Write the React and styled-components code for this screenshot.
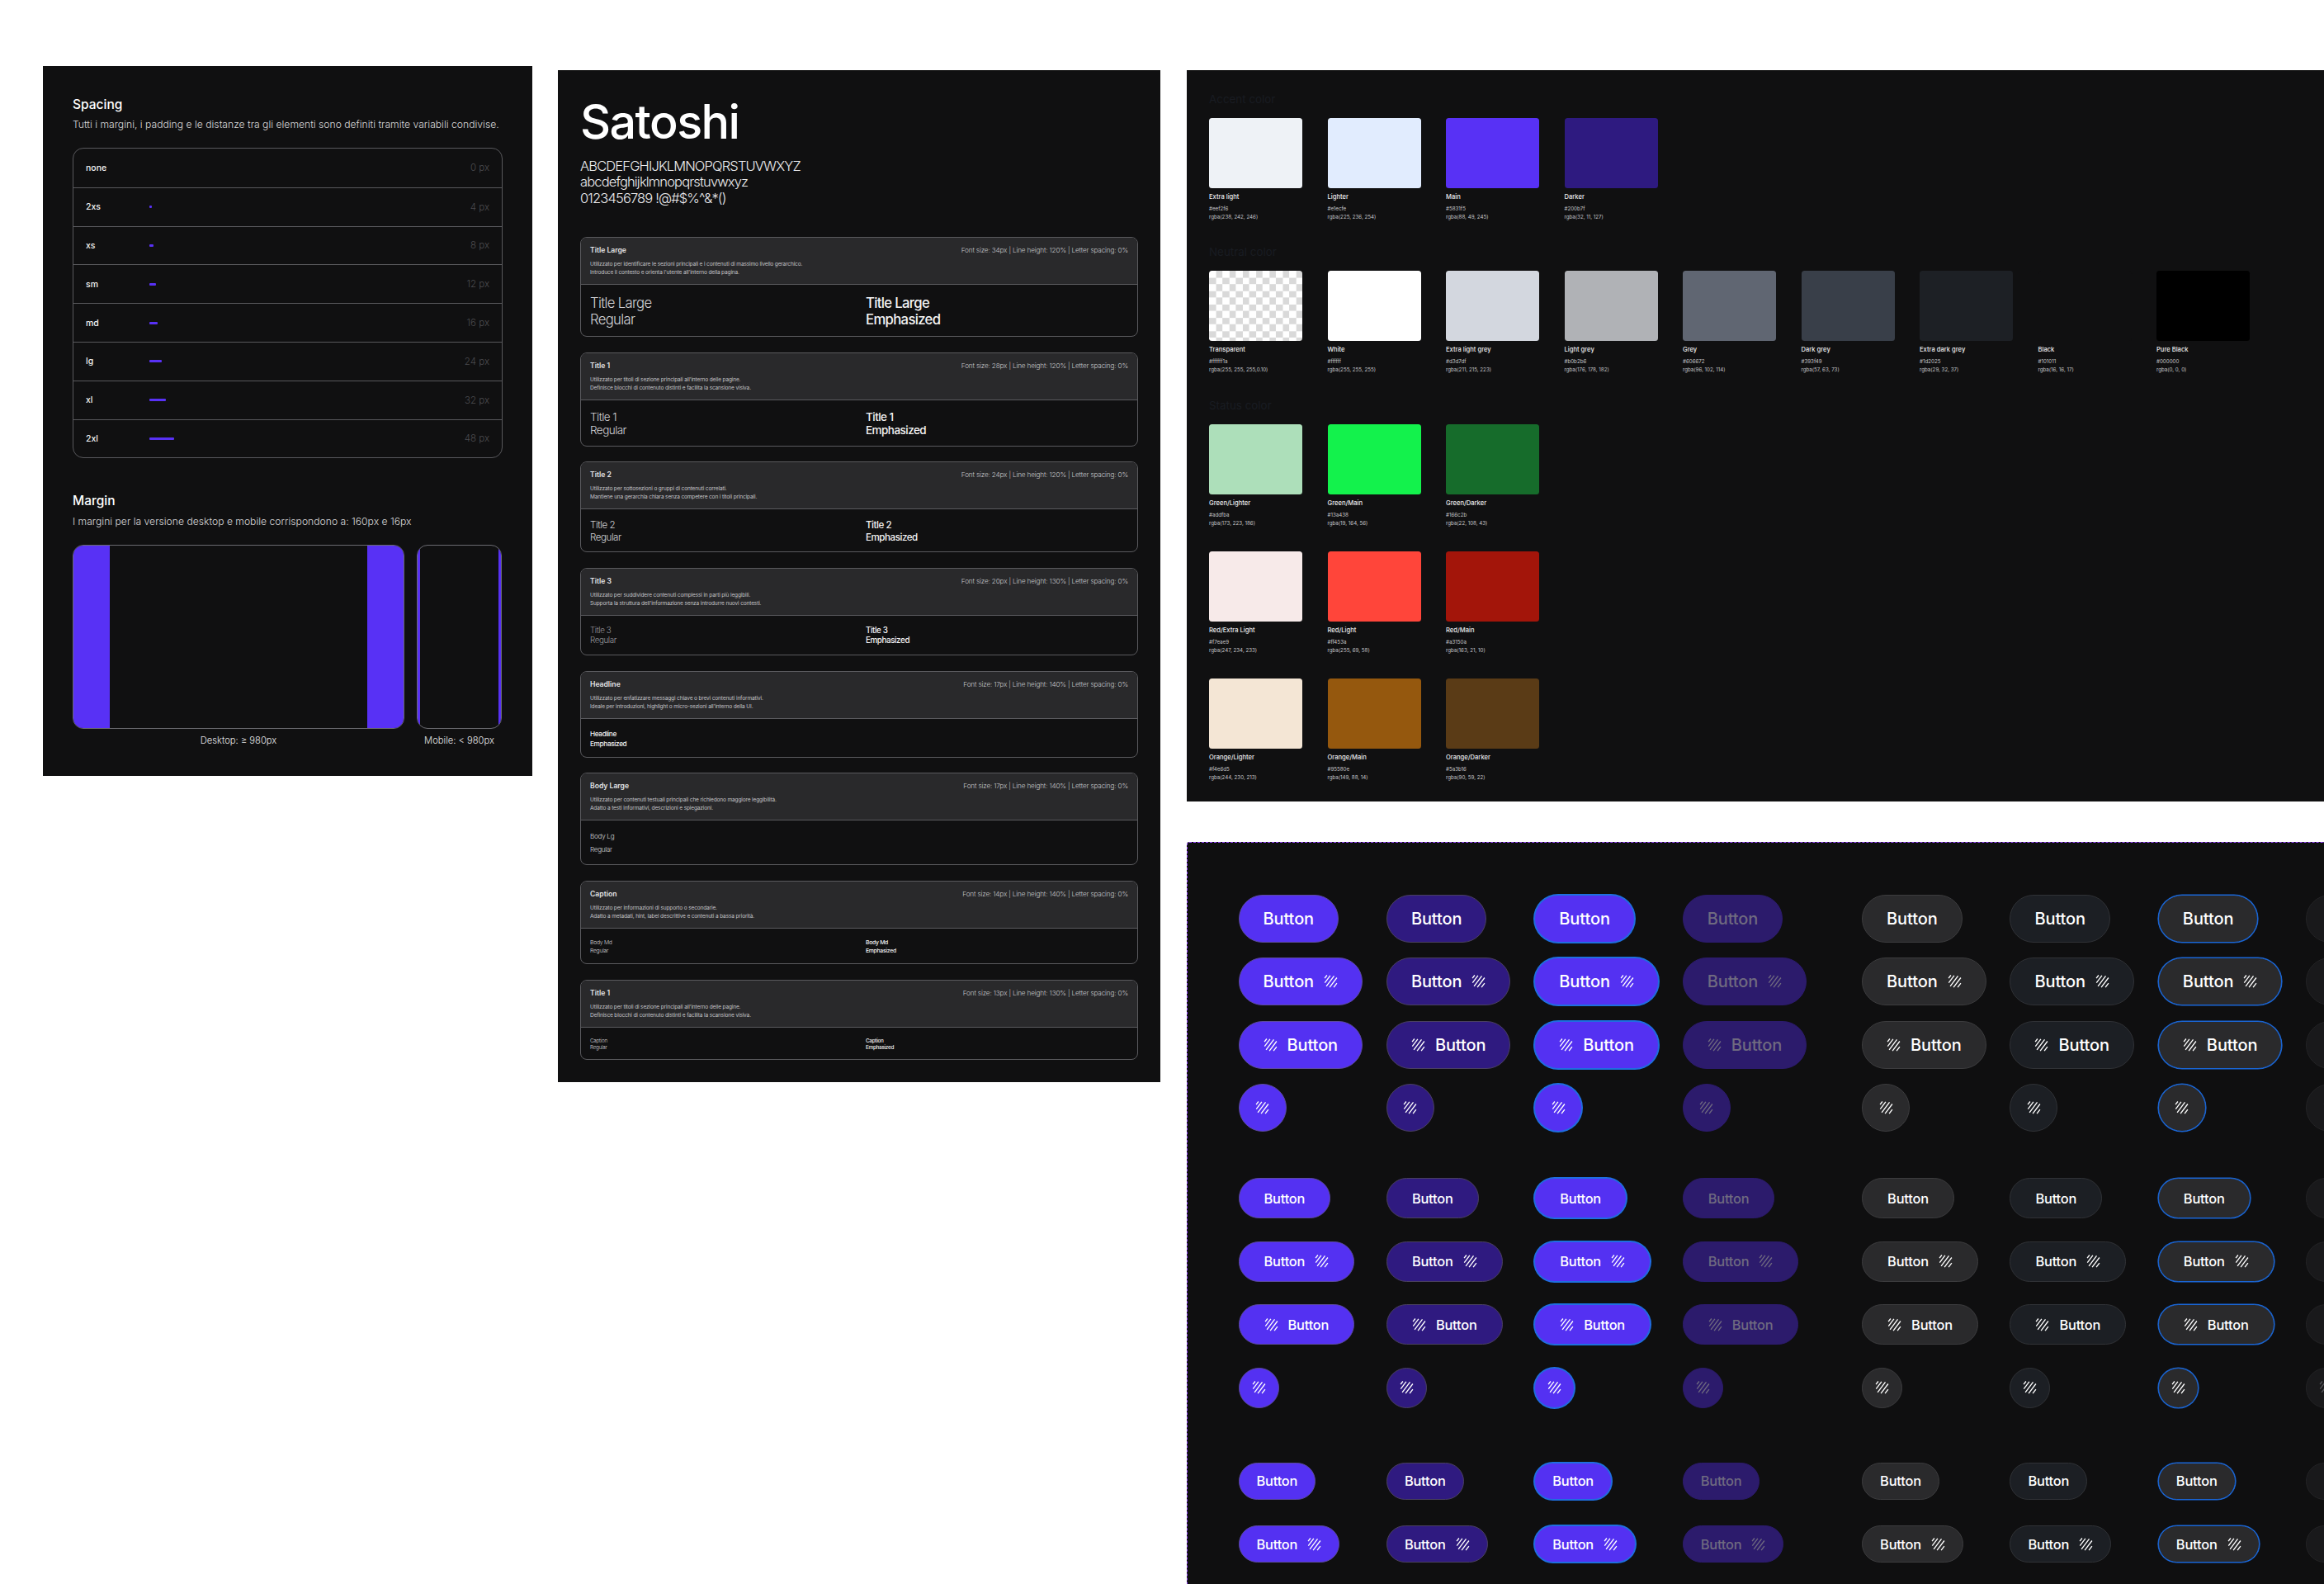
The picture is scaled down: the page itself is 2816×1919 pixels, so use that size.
import React from "react";
import styled, { createGlobalStyle, css } from "styled-components";

const FONT = `Inter, "Noto Sans", "Liberation Sans", sans-serif`;

const Global = createGlobalStyle`
  html, body { margin: 0; padding: 0; background: #fff; }
  body { width: 2816px; height: 1919px; overflow: hidden; font-family: ${FONT}; }
  * { box-sizing: border-box; }
`;

const Board = styled.div`
  display: flex;
  align-items: flex-start;
  gap: 31px;
  width: 2816px;
  height: 1919px;
  padding: 80px 0 0 52px;
  overflow: hidden;
`;

const Panel = styled.section`
  background: #101011;
  color: #f4f4f5;
`;

/* ---------- spacing panel ---------- */
const SpacingPanel = styled(Panel)`
  flex: 0 0 593px;
  min-width: 0;
  padding: 37px 36px 35px;
`;
const H2 = styled.h2`
  margin: 0;
  font-size: 15.5px;
  line-height: 20px;
  font-weight: 500;
  color: #fff;
`;
const Lead = styled.p`
  margin: ${(p) => p.$mt || 6}px 0 20px;
  font-size: 12.15px;
  line-height: 16px;
  font-weight: 300;
  color: #d8d8da;
  white-space: nowrap;
`;
const SpaceTable = styled.div`
  width: 521px;
  border: 1px solid #58585c;
  border-radius: 13px;
  margin-bottom: 42px;
`;
const SpaceRow = styled.div`
  display: flex;
  align-items: center;
  height: 46.8px;
  padding: 0 15px;
  border-top: ${(p) => (p.$first ? "none" : "1px solid #58585c")};
`;
const SpaceName = styled.span`
  flex: 0 0 77px;
  font-size: 10.5px;
  font-weight: 500;
  color: #f2f2f3;
`;
const SpaceBar = styled.span`
  height: 3px;
  background: #5831f5;
  border-radius: 1px;
  width: ${(p) => p.$w}px;
`;
const SpaceValue = styled.span`
  margin-left: auto;
  font-size: 11.5px;
  font-weight: 300;
  color: #4c4c50;
`;
const MarginRow = styled.div`
  display: flex;
  gap: 15px;
`;
const MarginCol = styled.div`
  display: flex;
  flex-direction: column;
  align-items: center;
  width: ${(p) => p.$w}px;
`;
const Frame = styled.div`
  position: relative;
  display: flex;
  justify-content: space-between;
  width: 100%;
  height: 223px;
  border: 1px solid #6a6a70;
  border-radius: 13px;
  overflow: hidden;
`;
const FrameMargin = styled.div`
  width: ${(p) => p.$w}px;
  background: #5831f5;
`;
const FrameLabel = styled.div`
  margin-top: 6px;
  font-size: 11.2px;
  line-height: 16px;
  font-weight: 300;
  color: #e4e4e6;
`;

/* ---------- type panel ---------- */
const TypePanel = styled(Panel)`
  flex: 0 0 730px;
  min-width: 0;
  margin-top: 5px;
  padding: 26px 27px 27px;
`;
const FontName = styled.h1`
  margin: 0;
  font-size: 57.5px;
  line-height: 72px;
  font-weight: 500;
  letter-spacing: -1.6px;
  color: #fff;
`;
const Glyphs = styled.div`
  margin: 8.5px 0 37px;
  font-size: 16.5px;
  line-height: 19.5px;
  font-weight: 300;
  color: #ececee;
  letter-spacing: -0.85px;
`;
const Cards = styled.div`
  display: flex;
  flex-direction: column;
  gap: 18.7px;
`;
const Card = styled.article`
  border: 1px solid #5a5a5e;
  border-radius: 8px;
  overflow: hidden;
`;
const CardHead = styled.header`
  display: flex;
  justify-content: space-between;
  height: 57px;
  padding: 10px 11px 0;
  background: #29292b;
  border-bottom: 1px solid #5a5a5e;
`;
const CardName = styled.div`
  font-size: 8.6px;
  line-height: 11px;
  font-weight: 600;
  color: #e6e6e8;
`;
const CardDesc = styled.div`
  margin-top: 6px;
  font-size: 6.5px;
  line-height: 10px;
  font-weight: 400;
  color: #c4c4c8;
  letter-spacing: -0.13px;
`;
const CardSpec = styled.div`
  font-size: 8.2px;
  line-height: 11px;
  font-weight: 300;
  color: #c8c8cc;
  letter-spacing: -0.16px;
  white-space: nowrap;
`;
const CardBody = styled.div`
  display: grid;
  grid-template-columns: 334px 1fr;
  padding: 12px 11px 10px;
`;
const Specimen = styled.div`
  font-size: ${(p) => p.$size}px;
  line-height: ${(p) => p.$lh}px;
  font-weight: ${(p) => (p.$strong ? 500 : 300)};
  color: ${(p) => (p.$strong ? "#f4f4f5" : p.$dim ? "#9a9a9e" : "#d2d2d5")};
  letter-spacing: -0.04em;
`;

/* ---------- colour panel ---------- */
const RightCol = styled.div`
  flex: 1;
  min-width: 0;
  margin-top: 5px;
  margin-left: 1px;
  display: flex;
  flex-direction: column;
  gap: 49px;
`;
const ColorPanel = styled(Panel)`
  height: 886px;
  padding: 26.5px 27px 0;
  display: flex;
  flex-direction: column;
  gap: 29.5px;
`;
const ColorHeading = styled.h3`
  margin: 0 0 14px;
  font-size: 13.4px;
  line-height: 17px;
  font-weight: 400;
  color: #191c22;
`;
const SwatchGrid = styled.div`
  display: grid;
  grid-template-columns: repeat(${(p) => p.$cols}, 113px);
  column-gap: 30.5px;
  row-gap: 29px;
`;
const Chip = styled.div`
  height: 85px;
  border-radius: 3.5px;
  background: ${(p) => p.$c};
  ${(p) =>
    p.$checker &&
    css`
      background-color: #fff;
      background-image: conic-gradient(#d9d9d9 25%, transparent 0 50%, #d9d9d9 0 75%, transparent 0);
      background-size: 16.2px 16.2px;
    `}
`;
const ChipName = styled.div`
  margin-top: 5px;
  font-size: 7.6px;
  line-height: 12px;
  font-weight: 500;
  color: #ececee;
  white-space: nowrap;
`;
const ChipHex = styled.div`
  margin-top: 3px;
  font-size: 6.2px;
  line-height: 10px;
  font-weight: 400;
  color: #c6c6ca;
  white-space: nowrap;
`;

/* ---------- buttons panel ---------- */
const ButtonPanel = styled(Panel)`
  position: relative;
  height: 899px;
  overflow: hidden;
  background: #0f0f10;
  border-top: 1.5px dashed #9747ff;
  border-left: 1.5px dashed #9747ff;
  border-top-left-radius: 3px;
  padding: 62.5px 0 0 61.5px;
`;
const ButtonGroup = styled.div`
  display: grid;
  width: 1500px;
  grid-template-columns: repeat(3, 179.4px) 217.4px repeat(4, 179.4px);
  row-gap: ${(p) => p.$gap}px;
  margin-bottom: ${(p) => p.$after}px;
  justify-items: start;
`;
const tones = {
  primary: css`
    background: #5431f2;
    color: #fff;
    border-color: #5c4a9e;
  `,
  deep: css`
    background: #2f1a80;
    color: #fff;
    border-color: #4a4060;
  `,
  focus: css`
    background: #5431f2;
    color: #fff;
    border-color: #1e6fe0;
    box-shadow: 0 0 0 1px #1e6fe0;
  `,
  off: css`
    background: #2c1b6c;
    color: #6f6a80;
    border-color: #2c1b6c;
  `,
  grey: css`
    background: #2a2a2c;
    color: #fff;
    border-color: #3c3c3e;
  `,
  slate: css`
    background: #1c1f24;
    color: #fff;
    border-color: #303236;
  `,
  ring: css`
    background: #2a2a2c;
    color: #fff;
    border-color: #1a66d6;
    box-shadow: 0 0 0 0.6px #1a66d6;
  `,
  mute: css`
    background: #19191b;
    color: #55555a;
    border-color: #232325;
  `,
};
const sizes = {
  lg: css`
    height: 58px;
    padding: 0 29px;
    font-size: 20px;
    letter-spacing: -0.1px;
  `,
  md: css`
    height: 49px;
    padding: 0 30px;
    font-size: 16.4px;
    letter-spacing: -0.2px;
  `,
  sm: css`
    height: 45px;
    padding: 0 21px;
    font-size: 16.4px;
    letter-spacing: -0.2px;
  `,
};
const Btn = styled.button`
  display: inline-flex;
  align-items: center;
  justify-content: center;
  gap: 12px;
  border: 1px solid transparent;
  border-radius: 999px;
  font-family: ${FONT};
  font-weight: 500;
  white-space: nowrap;
  ${(p) => sizes[p.$size]}
  ${(p) => tones[p.$tone]}
  ${(p) =>
    p.$round &&
    css`
      padding: 0;
      width: ${{ lg: 58, md: 49, sm: 45 }[p.$size]}px;
    `}
`;

const Hatch = () => (
  <svg width="17" height="16" viewBox="0 0 16 16" fill="none" stroke="currentColor" strokeWidth="1.35">
    <path d="M.6 4.2 3.4.5M.8 9.6 7.4.8M2.6 13.9 12 1.4M6.6 15.2 15.4 3.5M11.6 15.2l3.8-5.1" />
  </svg>
);

const spacing = [
  ["none", 0],
  ["2xs", 4],
  ["xs", 8],
  ["sm", 12],
  ["md", 16],
  ["lg", 24],
  ["xl", 32],
  ["2xl", 48],
];

const cards = [
  {
    name: "Title Large",
    spec: "Font size: 34px | Line height: 120% | Letter spacing: 0%",
    desc: ["Utilizzato per identificare le sezioni principali e i contenuti di massimo livello gerarchico.", "Introduce il contesto e orienta l'utente all'interno della pagina."],
    size: 16.7, lh: 20, a: ["Title Large", "Regular"], b: ["Title Large", "Emphasized"],
  },
  {
    name: "Title 1",
    spec: "Font size: 28px | Line height: 120% | Letter spacing: 0%",
    desc: ["Utilizzato per titoli di sezione principali all'interno delle pagine.", "Definisce blocchi di contenuto distinti e facilita la scansione visiva."],
    size: 13.5, lh: 16.4, a: ["Title 1", "Regular"], b: ["Title 1", "Emphasized"],
  },
  {
    name: "Title 2",
    spec: "Font size: 24px | Line height: 120% | Letter spacing: 0%",
    desc: ["Utilizzato per sottosezioni o gruppi di contenuti correlati.", "Mantiene una gerarchia chiara senza competere con i titoli principali."],
    size: 11.6, lh: 14.4, a: ["Title 2", "Regular"], b: ["Title 2", "Emphasized"],
  },
  {
    name: "Title 3",
    spec: "Font size: 20px | Line height: 130% | Letter spacing: 0%",
    desc: ["Utilizzato per suddividere contenuti complessi in parti più leggibili.", "Supporta la struttura dell'informazione senza introdurre nuovi contesti."],
    size: 9.8, lh: 12.6, dim: true, a: ["Title 3", "Regular"], b: ["Title 3", "Emphasized"],
  },
  {
    name: "Headline",
    spec: "Font size: 17px | Line height: 140% | Letter spacing: 0%",
    desc: ["Utilizzato per enfatizzare messaggi chiave o brevi contenuti informativi.", "Ideale per introduzioni, highlight o micro-sezioni all'interno della UI."],
    size: 8.2, lh: 12, strongFirst: true, a: ["Headline", "Emphasized"],
  },
  {
    name: "Body Large",
    spec: "Font size: 17px | Line height: 140% | Letter spacing: 0%",
    desc: ["Utilizzato per contenuti testuali principali che richiedono maggiore leggibilità.", "Adatto a testi informativi, descrizioni e spiegazioni."],
    size: 8.2, lh: 15.5, a: ["Body Lg", "Regular"],
  },
  {
    name: "Caption",
    spec: "Font size: 14px | Line height: 140% | Letter spacing: 0%",
    desc: ["Utilizzato per informazioni di supporto o secondarie.", "Adatto a metadati, hint, label descrittive e contenuti a bassa priorità."],
    size: 6.8, lh: 10, a: ["Body Md", "Regular"], b: ["Body Md", "Emphasized"],
  },
  {
    name: "Title 1",
    spec: "Font size: 13px | Line height: 130% | Letter spacing: 0%",
    desc: ["Utilizzato per titoli di sezione principali all'interno delle pagine.", "Definisce blocchi di contenuto distinti e facilita la scansione visiva."],
    size: 6.3, lh: 8, a: ["Caption", "Regular"], b: ["Caption", "Emphasized"],
  },
];

const accent = [
  ["Extra light", "#eef2f6", "rgba(238, 242, 246)", "#eef2f6"],
  ["Lighter", "#e1ecfe", "rgba(225, 236, 254)", "#e1ecfe"],
  ["Main", "#5831f5", "rgba(88, 49, 245)", "#5831f5"],
  ["Darker", "#200b7f", "rgba(32, 11, 127)", "#2e1a80"],
];
const neutral = [
  ["Transparent", "#ffffff1a", "rgba(255, 255, 255,0.10)", "checker"],
  ["White", "#ffffff", "rgba(255, 255, 255)", "#ffffff"],
  ["Extra light grey", "#d3d7df", "rgba(211, 215, 223)", "#d3d7df"],
  ["Light grey", "#b0b2b6", "rgba(176, 178, 182)", "#b0b2b6"],
  ["Grey", "#606672", "rgba(96, 102, 114)", "#606672"],
  ["Dark grey", "#393f49", "rgba(57, 63, 73)", "#393f49"],
  ["Extra dark grey", "#1d2025", "rgba(29, 32, 37)", "#1d2025"],
  ["Black", "#101011", "rgba(16, 16, 17)", "#101011"],
  ["Pure Black", "#000000", "rgba(0, 0, 0)", "#000000"],
];
const status = [
  ["Green/Lighter", "#addfba", "rgba(173, 223, 186)", "#addfba"],
  ["Green/Main", "#13a438", "rgba(19, 164, 56)", "#13f24c"],
  ["Green/Darker", "#166c2b", "rgba(22, 108, 43)", "#166c2b"],
  ["Red/Extra Light", "#f7eae9", "rgba(247, 234, 233)", "#f7eae9"],
  ["Red/Light", "#ff453a", "rgba(255, 69, 58)", "#ff453a"],
  ["Red/Main", "#a3150a", "rgba(163, 21, 10)", "#a3150a"],
  ["Orange/Lighter", "#f4e6d5", "rgba(244, 230, 213)", "#f4e6d5"],
  ["Orange/Main", "#95580e", "rgba(149, 88, 14)", "#95580e"],
  ["Orange/Darker", "#5a3b16", "rgba(90, 59, 22)", "#5a3b16"],
];

const toneOrder = ["primary", "deep", "focus", "off", "grey", "slate", "ring", "mute"];
const buttonGroups = [
  { size: "lg", gap: 18.5, after: 56, rows: ["text", "after", "before", "round"] },
  { size: "md", gap: 27.5, after: 66, rows: ["text", "after", "before", "round"] },
  { size: "sm", gap: 31.5, after: 0, rows: ["text", "after"] },
];

function Swatches({ items, cols = 9 }) {
  return (
    <SwatchGrid $cols={cols}>
      {items.map(([name, hex, rgba, fill]) => (
        <div key={name}>
          <Chip $c={fill} $checker={fill === "checker"} />
          <ChipName>{name}</ChipName>
          <ChipHex>
            {hex}
            <br />
            {rgba}
          </ChipHex>
        </div>
      ))}
    </SwatchGrid>
  );
}

export default function App() {
  return (
    <>
      <Global />
      <Board>
        <SpacingPanel>
          <H2>Spacing</H2>
          <Lead>Tutti i margini, i padding e le distanze tra gli elementi sono definiti tramite variabili condivise.</Lead>
          <SpaceTable>
            {spacing.map(([name, v], i) => (
              <SpaceRow key={name} $first={i === 0}>
                <SpaceName>{name}</SpaceName>
                {v > 0 && <SpaceBar $w={v * 0.63} />}
                <SpaceValue>{v} px</SpaceValue>
              </SpaceRow>
            ))}
          </SpaceTable>
          <H2>Margin</H2>
          <Lead $mt={7}>I margini per la versione desktop e mobile corrispondono a: 160px e 16px</Lead>
          <MarginRow>
            <MarginCol $w={402}>
              <Frame>
                <FrameMargin $w={44} />
                <FrameMargin $w={44} />
              </Frame>
              <FrameLabel>Desktop: ≥ 980px</FrameLabel>
            </MarginCol>
            <MarginCol $w={103}>
              <Frame>
                <FrameMargin $w={3} />
                <FrameMargin $w={3} />
              </Frame>
              <FrameLabel>Mobile: &lt; 980px</FrameLabel>
            </MarginCol>
          </MarginRow>
        </SpacingPanel>

        <TypePanel>
          <FontName>Satoshi</FontName>
          <Glyphs>
            ABCDEFGHIJKLMNOPQRSTUVWXYZ
            <br />
            abcdefghijklmnopqrstuvwxyz
            <br />
            0123456789 !@#$%^&*()
          </Glyphs>
          <Cards>
            {cards.map((c, i) => (
              <Card key={i}>
                <CardHead>
                  <div>
                    <CardName>{c.name}</CardName>
                    <CardDesc>
                      {c.desc[0]}
                      <br />
                      {c.desc[1]}
                    </CardDesc>
                  </div>
                  <CardSpec>{c.spec}</CardSpec>
                </CardHead>
                <CardBody>
                  <Specimen $size={c.size} $lh={c.lh} $dim={c.dim} $strong={c.strongFirst}>
                    {c.a[0]}
                    <br />
                    {c.a[1]}
                  </Specimen>
                  {c.b && (
                    <Specimen $size={c.size} $lh={c.lh} $strong>
                      {c.b[0]}
                      <br />
                      {c.b[1]}
                    </Specimen>
                  )}
                </CardBody>
              </Card>
            ))}
          </Cards>
        </TypePanel>

        <RightCol>
          <ColorPanel>
            <div>
              <ColorHeading>Accent color</ColorHeading>
              <Swatches items={accent} />
            </div>
            <div>
              <ColorHeading>Neutral color</ColorHeading>
              <Swatches items={neutral} />
            </div>
            <div>
              <ColorHeading>Status color</ColorHeading>
              <Swatches items={status} cols={3} />
            </div>
          </ColorPanel>

          <ButtonPanel>
            {buttonGroups.map((g) => (
              <ButtonGroup key={g.size} $gap={g.gap} $after={g.after}>
                {g.rows.map((row) =>
                  toneOrder.map((tone) => (
                    <Btn key={row + tone} $size={g.size} $tone={tone} $round={row === "round"}>
                      {(row === "before" || row === "round") && <Hatch />}
                      {row !== "round" && "Button"}
                      {row === "after" && <Hatch />}
                    </Btn>
                  ))
                )}
              </ButtonGroup>
            ))}
          </ButtonPanel>
        </RightCol>
      </Board>
    </>
  );
}
